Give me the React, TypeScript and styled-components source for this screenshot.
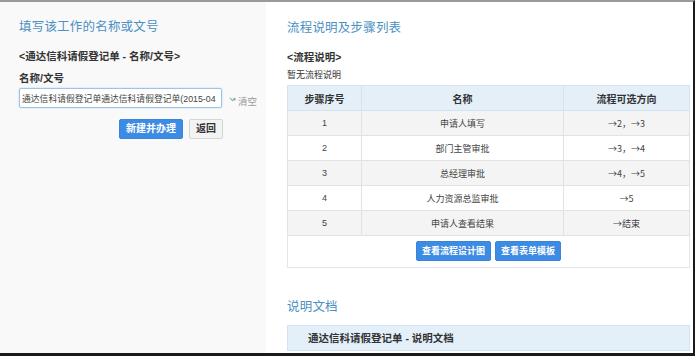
import React from 'react'
import styled, { createGlobalStyle } from 'styled-components'

const GlobalStyle = createGlobalStyle`
  html, body { margin: 0; padding: 0; background: #fff; }
  body { font-family: "Liberation Sans", "Noto Sans CJK SC", sans-serif; color: #333; }
  * { box-sizing: border-box; }
`

interface Step {
  no: number
  name: string
  next: string
}

const steps: Step[] = [
  { no: 1, name: '申请人填写', next: '→2，→3' },
  { no: 2, name: '部门主管审批', next: '→3，→4' },
  { no: 3, name: '总经理审批', next: '→4，→5' },
  { no: 4, name: '人力资源总监审批', next: '→5' },
  { no: 5, name: '申请人查看结果', next: '→结束' },
]

const App = () => {
  return (
    <Frame>
      <GlobalStyle />
      <LeftPanel>
        <Title>填写该工作的名称或文号</Title>
        <SubTitle>&lt;通达信科请假登记单 - 名称/文号&gt;</SubTitle>
        <Label>名称/文号</Label>
        <InputRow>
          <TextInput readOnly value="通达信科请假登记单通达信科请假登记单(2015-04" />
          <ClearLink>
            <svg width="7" height="7" viewBox="0 0 8 8">
              <path d="M1 1 L4 4 L7 2 M5 1.5 L7 2 L6.5 4" stroke="#8aa" strokeWidth="1.2" fill="none" />
            </svg>
            清空
          </ClearLink>
        </InputRow>
        <ButtonRow>
          <Button primary>新建并办理</Button>
          <Button>返回</Button>
        </ButtonRow>
      </LeftPanel>

      <RightPanel>
        <Title>流程说明及步骤列表</Title>
        <SubTitle>&lt;流程说明&gt;</SubTitle>
        <Note>暂无流程说明</Note>
        <Table>
          <thead>
            <tr>
              <Th style={{ width: 74 }}>步骤序号</Th>
              <Th style={{ width: 202 }}>名称</Th>
              <Th>流程可选方向</Th>
            </tr>
          </thead>
          <tbody>
            {steps.map((s) => (
              <Tr key={s.no} striped={s.no % 2 === 1}>
                <Td>{s.no}</Td>
                <Td>{s.name}</Td>
                <Td cjk>{s.next}</Td>
              </Tr>
            ))}
            <tr>
              <FootCell colSpan={3}>
                <Button primary small>查看流程设计图</Button>
                <Button primary small>查看表单模板</Button>
              </FootCell>
            </tr>
          </tbody>
        </Table>

        <DocTitle>说明文档</DocTitle>
        <DocPanel>通达信科请假登记单 - 说明文档</DocPanel>
      </RightPanel>
    </Frame>
  )
}

export default App

const Frame = styled.div`
  width: 695px;
  height: 356px;
  display: flex;
  overflow: hidden;
  border-top: 2px solid #9a9a9a;
  border-right: 2px solid #1a1a1a;
  border-bottom: 3px solid #1a1a1a;
`

const LeftPanel = styled.div`
  width: 266px;
  flex-shrink: 0;
  background: #f9f9f9;
  padding: 14px 0 0 19px;
`

const RightPanel = styled.div`
  flex: 1;
  background: #fff;
  padding: 15px 3px 0 21px;
  overflow: hidden;
`

const Title = styled.h2`
  margin: 0;
  font-size: 12.5px;
  line-height: 22px;
  font-weight: normal;
  letter-spacing: 0.2px;
  color: #4b90c2;
`

const SubTitle = styled.div`
  margin-top: 9px;
  font-size: 10.5px;
  line-height: 18px;
  font-weight: bold;
  color: #333;
`

const Label = styled.div`
  margin-top: 5px;
  font-size: 10.5px;
  line-height: 16px;
  font-weight: bold;
  color: #333;
`

const InputRow = styled.div`
  display: flex;
  align-items: center;
  margin-top: 2px;
  gap: 7px;
`

const TextInput = styled.input`
  width: 203px;
  height: 20px;
  padding: 0 2px;
  border: 1px solid #9ec3e6;
  border-radius: 2px;
  background: #fff;
  font-family: "Liberation Sans", "Noto Sans CJK SC", sans-serif;
  font-size: 8.8px;
  color: #444;
  outline: none;
  box-shadow: 0 0 2px rgba(82, 168, 236, 0.4);
`

const ClearLink = styled.span`
  display: flex;
  align-items: center;
  gap: 2px;
  margin-top: 5px;
  font-size: 9.5px;
  color: #999;
`

const ButtonRow = styled.div`
  display: flex;
  gap: 6px;
  margin: 11px 0 0 100px;
`

const Button = styled.button<{ primary?: boolean; small?: boolean }>`
  height: 20px;
  padding: 0 ${(p) => (p.small ? '5px' : '6px')};
  border-radius: 2px;
  border: 1px solid ${(p) => (p.primary ? '#3a85db' : '#d5d5d5')};
  background: ${(p) => (p.primary ? '#3d8ce3' : '#f3f3f3')};
  color: ${(p) => (p.primary ? '#fff' : '#333')};
  font-family: "Liberation Sans", "Noto Sans CJK SC", sans-serif;
  font-size: ${(p) => (p.small ? '9px' : '10px')};
  font-weight: bold;
  line-height: 18px;
  cursor: pointer;
`

const Note = styled.div`
  margin-top: 1px;
  font-size: 9px;
  line-height: 16px;
  color: #333;
`

const Table = styled.table`
  width: 403px;
  margin-top: 2px;
  border-collapse: collapse;
  font-size: 9px;
  color: #444;
`

const Th = styled.th`
  height: 25px;
  background: #e4eff8;
  border: 1px solid #d6e3ee;
  font-size: 10px;
  font-weight: bold;
  color: #333;
  text-align: center;
`

const Tr = styled.tr<{ striped: boolean }>`
  background: ${(p) => (p.striped ? '#f4f4f4' : '#fff')};
`

const Td = styled.td<{ cjk?: boolean }>`
  height: 25px;
  border: 1px solid #e2e2e2;
  text-align: center;
  font-family: ${(p) => (p.cjk ? '"Noto Sans CJK SC", sans-serif' : 'inherit')};
`

const FootCell = styled.td`
  height: 32px;
  border: 1px solid #e6e6e6;
  text-align: center;
  padding-bottom: 2px;
  & > button + button {
    margin-left: 4px;
  }
`

const DocTitle = styled.h2`
  margin: 28px 0 0;
  font-size: 12.5px;
  line-height: 22px;
  font-weight: normal;
  letter-spacing: 0.2px;
  color: #4b90c2;
`

const DocPanel = styled.div`
  width: 403px;
  height: 26px;
  margin-top: 7px;
  padding-left: 20px;
  background: #e4f0f9;
  border: 1px solid #d3e3f0;
  font-size: 10.5px;
  font-weight: bold;
  line-height: 24px;
  color: #333;
`
